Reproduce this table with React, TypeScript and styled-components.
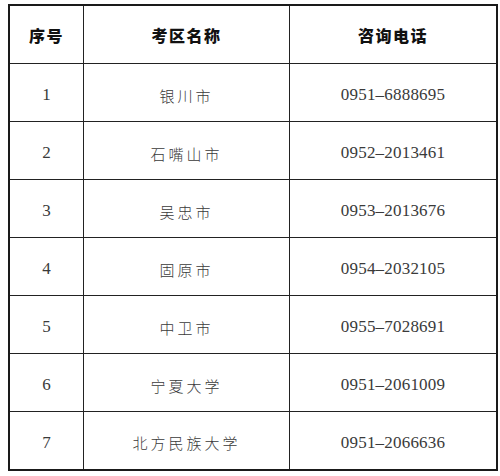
import React from 'react';
import styled, { createGlobalStyle } from 'styled-components';

const GlobalStyle = createGlobalStyle`
	html, body {
		margin: 0;
		padding: 0;
		background: #ffffff;
	}
	body {
		font-family: "Liberation Serif", "Noto Sans CJK SC", serif;
	}
`;

const Page = styled.div`
	width: 500px;
	height: 476px;
	padding: 4px 0 0 8px;
	box-sizing: border-box;
	background: #ffffff;
`;

const Table = styled.table`
	width: 484px;
	border-collapse: collapse;
	table-layout: fixed;
	border: 2px solid #1a1a1a;
`;

const HeadCell = styled.th<{ $width: number }>`
	width: ${({ $width }) => $width}px;
	height: 57px;
	padding: 0;
	border: 1.5px solid #222;
	font-family: "Noto Sans CJK SC", sans-serif;
	font-weight: 900;
	font-size: 16px;
	letter-spacing: 1.5px;
	color: #111;
	text-align: center;
	vertical-align: middle;
`;

const Cell = styled.td<{ $cjk?: boolean }>`
	height: 58px;
	padding: 5px 0 0 0;
	box-sizing: border-box;
	border: 1.5px solid #222;
	text-align: center;
	vertical-align: middle;
	color: #3a3a3a;
	font-family: ${({ $cjk }) =>
		$cjk ? '"Noto Sans CJK SC", sans-serif' : '"Liberation Serif", "Times New Roman", serif'};
	font-size: ${({ $cjk }) => ($cjk ? '15px' : '17px')};
	font-weight: ${({ $cjk }) => ($cjk ? 300 : 400)};
	letter-spacing: ${({ $cjk }) => ($cjk ? '3px' : '0.2px')};
`;

const rows = [
	{ no: '1', name: '银川市', phone: '0951–6888695' },
	{ no: '2', name: '石嘴山市', phone: '0952–2013461' },
	{ no: '3', name: '吴忠市', phone: '0953–2013676' },
	{ no: '4', name: '固原市', phone: '0954–2032105' },
	{ no: '5', name: '中卫市', phone: '0955–7028691' },
	{ no: '6', name: '宁夏大学', phone: '0951–2061009' },
	{ no: '7', name: '北方民族大学', phone: '0951–2066636' },
];

export default function App(): React.ReactElement {
	return (
		<Page>
			<GlobalStyle />
			<Table>
				<thead>
					<tr>
						<HeadCell $width={73}>序号</HeadCell>
						<HeadCell $width={205}>考区名称</HeadCell>
						<HeadCell $width={206}>咨询电话</HeadCell>
					</tr>
				</thead>
				<tbody>
					{rows.map((row) => (
						<tr key={row.no}>
							<Cell>{row.no}</Cell>
							<Cell $cjk>{row.name}</Cell>
							<Cell>{row.phone}</Cell>
						</tr>
					))}
				</tbody>
			</Table>
		</Page>
	);
}
